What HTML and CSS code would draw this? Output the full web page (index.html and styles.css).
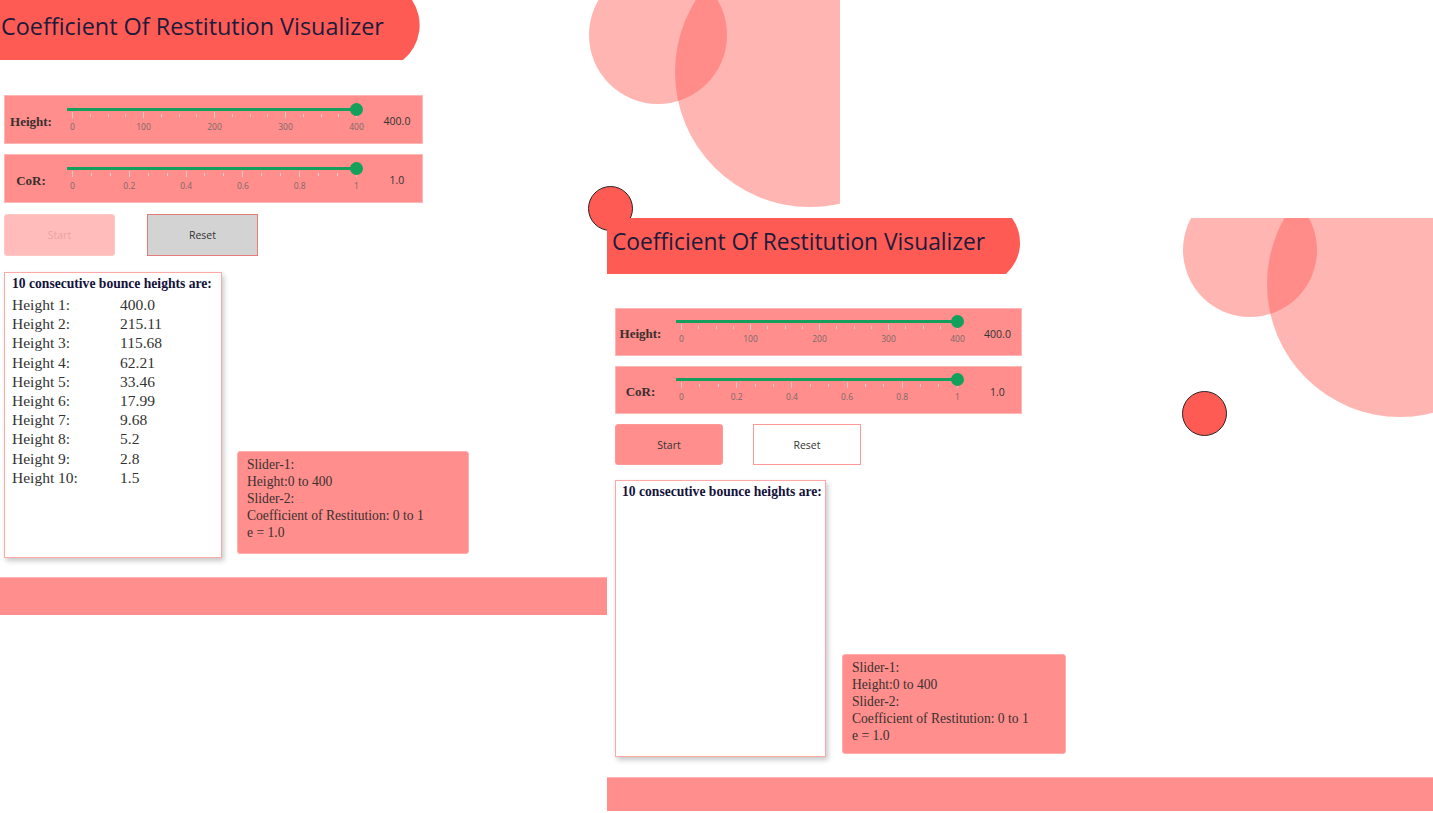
FILE: index.html
```html
<!DOCTYPE html>
<html lang="en">
<head>
<meta charset="utf-8">
<title>Coefficient Of Restitution Visualizer</title>
<link rel="stylesheet" href="styles.css">
</head>
<body>
<div class="desktop">

  <section class="window w1">
    <div class="deco deco-small"></div>
    <div class="deco deco-big"></div>
    <h1 class="title">Coefficient Of Restitution Visualizer</h1>
    <div class="main">
      <div class="slider-box">
        <span class="s-label">Height:</span>
        <div class="slider">
          <div class="track"><span class="thumb"></span></div>
          <div class="ticks">
            <i class="major"></i><i></i><i></i><i></i><i class="major"></i><i></i><i></i><i></i><i class="major"></i><i></i><i></i><i></i><i class="major"></i><i></i><i></i><i></i><i class="major"></i>
          </div>
          <div class="tick-labels"><span>0</span><span>100</span><span>200</span><span>300</span><span>400</span></div>
        </div>
        <span class="s-value">400.0</span>
      </div>
      <div class="slider-box">
        <span class="s-label">CoR:</span>
        <div class="slider">
          <div class="track"><span class="thumb"></span></div>
          <div class="ticks">
            <i class="major"></i><i></i><i></i><i class="major"></i><i></i><i></i><i class="major"></i><i></i><i></i><i class="major"></i><i></i><i></i><i class="major"></i><i></i><i></i><i class="major"></i>
          </div>
          <div class="tick-labels"><span>0</span><span>0.2</span><span>0.4</span><span>0.6</span><span>0.8</span><span>1</span></div>
        </div>
        <span class="s-value">1.0</span>
      </div>
      <div class="buttons">
        <button class="btn start" disabled>Start</button>
        <button class="btn reset">Reset</button>
      </div>
      <div class="results-row">
        <div class="results">
          <div class="results-title">10 consecutive bounce heights are:</div>
          <div class="rows">
            <span>Height 1:</span><span>400.0</span>
            <span>Height 2:</span><span>215.11</span>
            <span>Height 3:</span><span>115.68</span>
            <span>Height 4:</span><span>62.21</span>
            <span>Height 5:</span><span>33.46</span>
            <span>Height 6:</span><span>17.99</span>
            <span>Height 7:</span><span>9.68</span>
            <span>Height 8:</span><span>5.2</span>
            <span>Height 9:</span><span>2.8</span>
            <span>Height 10:</span><span>1.5</span>
          </div>
        </div>
        <div class="info">Slider-1:<br>Height:0 to 400<br>Slider-2:<br>Coefficient of Restitution: 0 to 1<br>e = 1.0</div>
      </div>
    </div>
    <div class="footer"></div>
    <div class="ball"></div>
  </section>

  <section class="window w2">
    <div class="deco deco-small"></div>
    <div class="deco deco-big"></div>
    <h1 class="title">Coefficient Of Restitution Visualizer</h1>
    <div class="main">
      <div class="slider-box">
        <span class="s-label">Height:</span>
        <div class="slider">
          <div class="track"><span class="thumb"></span></div>
          <div class="ticks">
            <i class="major"></i><i></i><i></i><i></i><i class="major"></i><i></i><i></i><i></i><i class="major"></i><i></i><i></i><i></i><i class="major"></i><i></i><i></i><i></i><i class="major"></i>
          </div>
          <div class="tick-labels"><span>0</span><span>100</span><span>200</span><span>300</span><span>400</span></div>
        </div>
        <span class="s-value">400.0</span>
      </div>
      <div class="slider-box">
        <span class="s-label">CoR:</span>
        <div class="slider">
          <div class="track"><span class="thumb"></span></div>
          <div class="ticks">
            <i class="major"></i><i></i><i></i><i class="major"></i><i></i><i></i><i class="major"></i><i></i><i></i><i class="major"></i><i></i><i></i><i class="major"></i><i></i><i></i><i class="major"></i>
          </div>
          <div class="tick-labels"><span>0</span><span>0.2</span><span>0.4</span><span>0.6</span><span>0.8</span><span>1</span></div>
        </div>
        <span class="s-value">1.0</span>
      </div>
      <div class="buttons">
        <button class="btn start">Start</button>
        <button class="btn reset">Reset</button>
      </div>
      <div class="results-row">
        <div class="results">
          <div class="results-title">10 consecutive bounce heights are:</div>
        </div>
        <div class="info">Slider-1:<br>Height:0 to 400<br>Slider-2:<br>Coefficient of Restitution: 0 to 1<br>e = 1.0</div>
      </div>
    </div>
    <div class="footer"></div>
    <div class="ball"></div>
  </section>

</div>
</body>
</html>
```

FILE: styles.css
```css
* { box-sizing: border-box; margin: 0; padding: 0; }
html, body { width: 1433px; height: 813px; overflow: hidden; background: #fff; }
body { font-family: "Liberation Serif", "Times New Roman", serif; color: #333; }

.desktop { position: relative; width: 1433px; height: 813px; overflow: hidden; background: #fff; }

.window { position: absolute; background: #fff; overflow: hidden; }
.w1 { left: 0; top: 0; width: 840px; height: 640px; z-index: 1; }
.w2 { left: 607px; top: 218px; width: 826px; height: 595px; z-index: 2; }

/* decorative circles */
.deco { position: absolute; border-radius: 50%; background: rgba(255, 91, 85, 0.45); }
.w1 .deco-small { left: 589px; top: -34px; width: 138px; height: 138px; }
.w1 .deco-big { left: 675px; top: -63px; width: 270px; height: 270px; }
.w2 .deco-small { left: 576px; top: -35px; width: 134px; height: 134px; }
.w2 .deco-big { left: 660px; top: -67px; width: 266px; height: 266px; }

/* bouncing ball */
.ball { position: absolute; width: 45px; height: 45px; border-radius: 50%; background: #ff5b55; border: 1px solid #2b2222; z-index: 0; }
.w1 .ball { left: 588px; top: 186px; }
.w2 .ball { left: 575px; top: 173px; }

/* title */
.title {
  position: relative; z-index: 1;
  display: flex; align-items: center;
  background: #ff5b55; color: #1b1b3b;
  font-family: "Open Sans", "Noto Sans", sans-serif; font-weight: 400;
  white-space: nowrap;
}
.w1 .title { width: 421px; height: 60px; font-size: 23.4px; padding: 0 0 9px 1px; clip-path: path('M0 0 H412 A45 45 0 0 1 403 60 H0 Z'); }
.w2 .title { width: 414px; height: 56px; font-size: 22.8px; padding: 0 0 10px 5px; clip-path: path('M0 0 H405 A42 42 0 0 1 399 56 H0 Z'); }

.main { position: relative; z-index: 1; }
.w1 .main { padding: 35px 0 0 4px; }
.w2 .main { padding: 34px 0 0 8px; }

/* slider boxes */
.slider-box {
  display: grid; align-items: start;
  background: #ff8e8c; border: 1px solid #ffb7b5;
  margin-bottom: 10px;
}
.w1 .slider-box { width: 419px; height: 49px; grid-template-columns: 52px 295px 1fr; column-gap: 10px; }
.w2 .slider-box { width: 407px; height: 48px; grid-template-columns: 49px 287px 1fr; column-gap: 11px; }

.s-label { align-self: center; padding-top: 4px; text-align: center; font-weight: bold; font-size: 13px; color: #3a2e2e; }
.s-value { align-self: center; padding-top: 3px; text-align: center; font-family: "Open Sans", "Noto Sans", sans-serif; font-size: 10.5px; color: #333; }

.slider { padding-top: 12px; }
.w2 .slider { padding-top: 11px; }
.track { position: relative; height: 2.5px; background: #169f5c; }
.thumb { position: absolute; right: -1px; top: -5.5px; width: 13px; height: 13px; border-radius: 50%; background: #12a05a; }

.ticks { display: flex; justify-content: space-between; align-items: flex-start; height: 6px; margin: 1px 5px 0; }
.ticks i { display: block; width: 1px; height: 3px; margin-top: 2px; background: #d9cece; }
.ticks i.major { height: 6px; margin-top: 0; background: #d4caca; }

.tick-labels { display: flex; justify-content: space-between; margin: 3px 5px 0; font-family: "Open Sans", "Noto Sans", sans-serif; font-size: 8.5px; line-height: 11px; color: #7a6a6a; }
.tick-labels span { width: 1px; display: flex; justify-content: center; white-space: nowrap; }

/* buttons */
.buttons { display: flex; }
.w1 .buttons { gap: 32px; margin-top: 11px; }
.w2 .buttons { gap: 30px; margin-top: 10px; }
.btn {
  display: flex; align-items: center; justify-content: center;
  font-family: "Open Sans", "Noto Sans", sans-serif; font-size: 10.5px; color: #333;
  border-radius: 3px;
}
.w1 .btn { width: 111px; height: 42px; }
.w2 .btn { width: 108px; height: 41px; }
.w1 .start { background: #ffbcbb; color: #eba3a2; border: 1px solid #ffc8c7; }
.w1 .reset { background: #d3d3d3; border: 1px solid #e47c7a; border-radius: 0; }
.w2 .start { background: #ff8e8c; border: 1px solid #ff9a98; }
.w2 .reset { background: #fff; border: 1px solid #ff9896; border-radius: 0; }

/* results */
.results-row { display: flex; align-items: flex-end; }
.w1 .results-row { margin-top: 16px; gap: 15px; }
.w2 .results-row { margin-top: 15px; gap: 16px; }

.results { background: #fff; border: 1px solid #ffa9a7; box-shadow: 2px 3px 5px rgba(0, 0, 0, 0.22); }
.w1 .results { width: 218px; height: 286px; padding: 3px 0 0 7px; }
.w2 .results { width: 211px; height: 277px; padding: 3px 0 0 6px; }
.results-title { font-weight: bold; font-size: 13.6px; line-height: 16px; color: #13133a; white-space: nowrap; }
.rows { display: grid; grid-template-columns: 108px auto; margin-top: 3px; font-size: 15.5px; line-height: 19.2px; color: #333; }

.info { background: #ff8e8c; border: 1px solid #ffb0ae; border-radius: 3px; font-size: 13.6px; line-height: 17px; color: #3a3030; white-space: nowrap; }
.w1 .info { width: 232px; height: 103px; padding: 4px 9px; margin-bottom: 4px; }
.w2 .info { width: 224px; height: 100px; padding: 4px 9px; margin-bottom: 3px; }

/* footer */
.footer { position: relative; z-index: 1; background: #ff8e8c; border-top: 1px solid #ffb3b1; }
.w1 .footer { height: 38px; margin-top: 19px; }
.w2 .footer { height: 34px; margin-top: 20px; }
```
